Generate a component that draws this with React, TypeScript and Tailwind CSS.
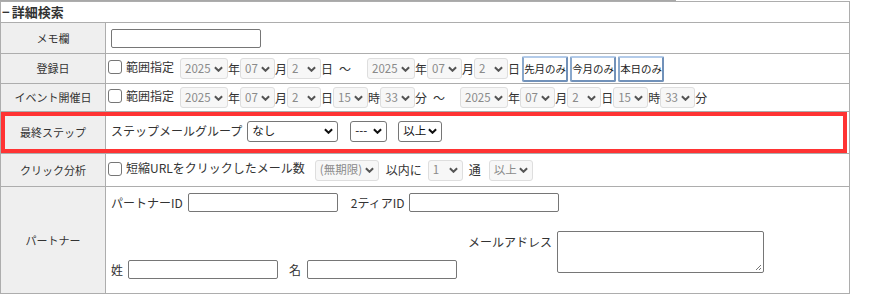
import React from 'react';
import clsx from 'clsx';

const Chevron = ({ dark }: { dark?: boolean }) => (
    <svg width="9" height="6" viewBox="0 0 10 6" className={clsx('shrink-0', dark ? 'text-[#111]' : 'text-[#555]')}>
        <path d="M1 1 L5 5 L9 1" fill="none" stroke="currentColor" strokeWidth="2.2" />
    </svg>
);

const Sel = ({ v, w, on }: { v: string; w: string; on?: boolean }) => (
    <div
        className={clsx(
            'inline-flex items-center justify-between h-[21px] rounded-[3px] border pl-[4px] pr-[4px] shrink-0 whitespace-nowrap overflow-hidden text-[11.5px]',
            w,
            on ? 'border-[#767676] bg-white text-[#111]' : 'border-[#dedede] bg-[#f7f7f7] text-[#8a8a8a]'
        )}
    >
        <span className="leading-none">{v}</span>
        <Chevron dark={on} />
    </div>
);

const Box = () => (
    <span className="inline-block w-[14px] h-[14px] -mt-[3px] rounded-[3px] border border-[#767676] bg-white ml-[-3px] mr-[4px] shrink-0" />
);

const Input = ({ w }: { w: string }) => (
    <div className={clsx('h-[19px] rounded-[2px] border border-[#767676] bg-white shrink-0', w)} />
);

const Btn = ({ t }: { t: string }) => (
    <div className="h-[26px] w-[46px] shrink-0 flex items-center justify-center bg-white border-2 border-[#b3cbe9] border-r-[#7191b9] border-b-[#7191b9] border-l-[#8aa8cc] rounded-[2px] text-[10.5px] text-[#222] whitespace-nowrap">
        {t}
    </div>
);

const Row = ({ h, label, children }: { h: string; label: string; children: React.ReactNode }) => (
    <div className={clsx('flex border-b border-[#adadad]', h)}>
        <div className="w-[105px] shrink-0 border-r border-[#adadad] bg-[#efefef] flex items-center justify-center text-[11px]">
            {label}
        </div>
        <div className="flex-1 flex items-center pl-[5px] whitespace-nowrap">{children}</div>
    </div>
);

export default function App() {
    return (
        <div className="w-[876px] h-[294px] bg-white text-[#333] text-[12px] font-['Noto_Sans_CJK_JP',sans-serif] overflow-hidden">
            <div className="h-px w-[676px] bg-[#a8a8a8]" />
            <div className="relative w-[850px] border border-[#adadad]">
                <div className="h-[21px] border-b border-[#adadad] font-bold text-[13px] leading-[20px] pl-[1px]">
                    <span className="mr-[2px]">−</span>詳細検索
                </div>
                <Row h="h-[31px]" label="メモ欄">
                    <Input w="w-[150px]" />
                </Row>
                <Row h="h-[30px]" label="登録日">
                    <Box />
                    <span className="-mt-[3px]">範囲指定</span>
                    <div className="ml-[6px] flex items-center">
                        <Sel v="2025" w="w-[48px]" />
                        <span>年</span>
                        <Sel v="07" w="w-[35px]" />
                        <span>月</span>
                        <Sel v="2" w="w-[34px]" />
                        <span>日</span>
                        <span className="ml-[6px] mr-[16px]">～</span>
                        <Sel v="2025" w="w-[48px]" />
                        <span>年</span>
                        <Sel v="07" w="w-[35px]" />
                        <span>月</span>
                        <Sel v="2" w="w-[34px]" />
                        <span>日</span>
                        <div className="ml-[2px] flex gap-[2px]">
                            <Btn t="先月のみ" />
                            <Btn t="今月のみ" />
                            <Btn t="本日のみ" />
                        </div>
                    </div>
                </Row>
                <Row h="h-[28px]" label="イベント開催日">
                    <Box />
                    <span className="-mt-[3px]">範囲指定</span>
                    <div className="ml-[6px] flex items-center">
                        <Sel v="2025" w="w-[48px]" />
                        <span>年</span>
                        <Sel v="07" w="w-[35px]" />
                        <span>月</span>
                        <Sel v="2" w="w-[34px]" />
                        <span>日</span>
                        <Sel v="15" w="w-[35px]" />
                        <span>時</span>
                        <Sel v="33" w="w-[35px]" />
                        <span>分</span>
                        <span className="ml-[6px] mr-[15px]">～</span>
                        <Sel v="2025" w="w-[48px]" />
                        <span>年</span>
                        <Sel v="07" w="w-[35px]" />
                        <span>月</span>
                        <Sel v="2" w="w-[34px]" />
                        <span>日</span>
                        <Sel v="15" w="w-[35px]" />
                        <span>時</span>
                        <Sel v="33" w="w-[35px]" />
                        <span>分</span>
                    </div>
                </Row>
                <Row h="h-[42px]" label="最終ステップ">
                    <span className="-mt-[3px] flex items-center">
                        <span>ステップメールグループ</span>
                        <span className="ml-[5px]"><Sel v="なし" w="w-[91px]" on /></span>
                        <span className="ml-[12px]"><Sel v="---" w="w-[37px]" on /></span>
                        <span className="ml-[11px]"><Sel v="以上" w="w-[44px]" on /></span>
                    </span>
                </Row>
                <Row h="h-[33px]" label="クリック分析">
                    <Box />
                    <span className="-mt-[4px]">短縮URLをクリックしたメール数</span>
                    <span className="ml-[10px]"><Sel v="(無期限)" w="w-[64px]" /></span>
                    <span className="ml-[7px]">以内に</span>
                    <span className="ml-[6px]"><Sel v="1" w="w-[35px]" /></span>
                    <span className="ml-[6px]">通</span>
                    <span className="ml-[8px]"><Sel v="以上" w="w-[44px]" /></span>
                </Row>
                <div className="flex h-[106px]">
                    <div className="w-[105px] shrink-0 border-r border-[#adadad] bg-[#efefef] flex items-center justify-center text-[11px]">
                        パートナー
                    </div>
                    <div className="flex-1 pl-[5px] pt-[6px] whitespace-nowrap">
                        <div className="flex items-center h-[19px]">
                            <span>パートナーID</span>
                            <span className="ml-[5px]"><Input w="w-[150px]" /></span>
                            <span className="ml-[13px]">2ティアID</span>
                            <span className="ml-[4px]"><Input w="w-[150px]" /></span>
                        </div>
                        <div className="flex items-start mt-[19px]">
                            <div className="flex items-center mt-[29px]">
                                <span>姓</span>
                                <span className="ml-[5px]"><Input w="w-[150px]" /></span>
                                <span className="ml-[11px]">名</span>
                                <span className="ml-[6px]"><Input w="w-[150px]" /></span>
                            </div>
                            <div className="flex items-start ml-[11px]">
                                <span className="mt-[2px] leading-[18px]">メールアドレス</span>
                                <div className="relative ml-[5px] w-[207px] h-[42px] rounded-[2px] border border-[#767676] bg-white">
                                    <svg width="7" height="7" viewBox="0 0 7 7" className="absolute right-[1px] bottom-[1px]">
                                        <path d="M6 1 L1 6 M6 4 L4 6" stroke="#777" strokeWidth="1" />
                                    </svg>
                                </div>
                            </div>
                        </div>
                    </div>
                </div>
                <div className="absolute left-0 top-[110px] w-[846px] h-[41px] border-4 border-[#ff3333]" />
            </div>
        </div>
    );
}
